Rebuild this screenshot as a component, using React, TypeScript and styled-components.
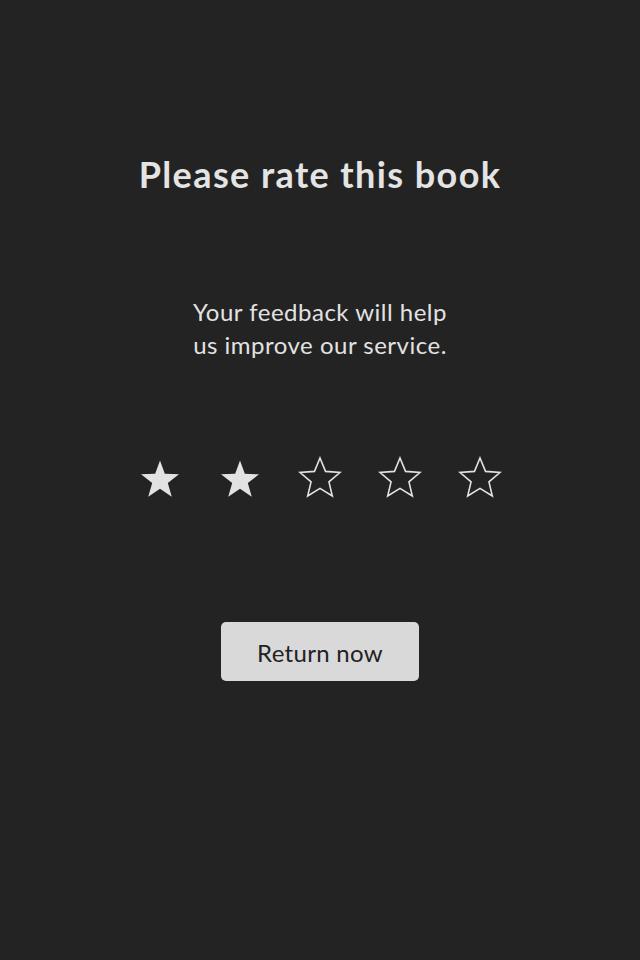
import React from "react";
import styled, { createGlobalStyle } from "styled-components";

const Global = createGlobalStyle`
  html, body { margin: 0; padding: 0; background: #232323; }
  body { font-family: "Lato", "Open Sans", sans-serif; }
`;

const Screen = styled.main`
  width: 640px;
  height: 960px;
  background: #232323;
  display: flex;
  flex-direction: column;
  align-items: center;
  padding-top: 150px;
  box-sizing: border-box;
  color: #e2e2e2;
`;

const Title = styled.h1`
  margin: 0;
  font-size: 36px;
  line-height: 48px;
  font-weight: 700;
  letter-spacing: 1.4px;
  color: #e4e4e4;
`;

const Subtitle = styled.p`
  margin: 97px 0 0;
  font-size: 24px;
  line-height: 33px;
  font-weight: 400;
  letter-spacing: 0.5px;
  text-align: center;
  color: #e2e2e2;
`;

const Stars = styled.div`
  margin-top: 95px;
  display: flex;
  gap: 36px;
`;

const StarBox = styled.svg`
  width: 44px;
  height: 44px;
  display: block;
`;

const Button = styled.button`
  margin-top: 122px;
  width: 198px;
  height: 59px;
  border: none;
  border-radius: 5px;
  background: #d9d9d9;
  color: #222;
  font-family: "Lato", "Open Sans", sans-serif;
  font-size: 24px;
  font-weight: 400;
  letter-spacing: 0.3px;
  padding: 2px 0 0;
  cursor: pointer;
`;

function starPoints(cx: number, cy: number, R: number, r: number) {
  const pts: string[] = [];
  for (let i = 0; i < 10; i++) {
    const rad = i % 2 === 0 ? R : r;
    const a = (-90 + i * 36) * (Math.PI / 180);
    pts.push(`${(cx + rad * Math.cos(a)).toFixed(2)},${(cy + rad * Math.sin(a)).toFixed(2)}`);
  }
  return pts.join(" ");
}

const Star = ({ filled }: { filled: boolean }) => (
  <StarBox viewBox="0 0 44 44">
    {filled ? (
      <polygon points={starPoints(22, 24.5, 20, 8.2)} fill="#e2e2e2" />
    ) : (
      <polygon
        points={starPoints(22, 23, 21, 9.4)}
        fill="none"
        stroke="#e2e2e2"
        strokeWidth={1.6}
        strokeLinejoin="miter"
      />
    )}
  </StarBox>
);

export default function App() {
  const rating = 2;
  return (
    <>
      <Global />
      <Screen>
        <Title>Please rate this book</Title>
        <Subtitle>
          Your feedback will help
          <br />
          us improve our service.
        </Subtitle>
        <Stars>
          {[1, 2, 3, 4, 5].map((i) => (
            <Star key={i} filled={i <= rating} />
          ))}
        </Stars>
        <Button>Return now</Button>
      </Screen>
    </>
  );
}
